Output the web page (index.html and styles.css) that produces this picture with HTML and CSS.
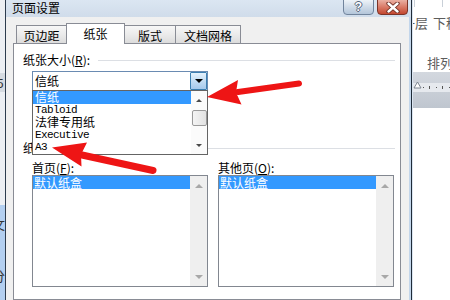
FILE: index.html
```html
<!DOCTYPE html>
<html>
<head>
<meta charset="utf-8">
<link rel="stylesheet" href="styles.css">
</head>
<body>
<div class="screen">
  <div class="app-left">
    <div class="al-top"><div class="al-box">5</div></div>
    <div class="al-bottom"><span class="al-ch">文</span><span class="al-ch al-ch2">分</span></div>
  </div>

  <div class="dialog">
    <div class="titlebar">
      <span class="title">页面设置</span>
      <div class="caption-btns">
        <div class="cbtn help"><span class="help-q">?</span></div>
        <div class="cbtn close">
          <svg width="14" height="11" viewBox="0 0 14 11">
            <path d="M2.5 1.5 L11.5 9.5 M11.5 1.5 L2.5 9.5" stroke="#6b2a20" stroke-width="4.2" stroke-linecap="round"/>
            <path d="M2.5 1.5 L11.5 9.5 M11.5 1.5 L2.5 9.5" stroke="#ffffff" stroke-width="2.4" stroke-linecap="round"/>
          </svg>
        </div>
      </div>
    </div>
    <div class="frame">
      <div class="client">
        <div class="tabs">
          <div class="tab t1">页边距</div>
          <div class="tab active t2">纸张</div>
          <div class="tab t3">版式</div>
          <div class="tab t4">文档网格</div>
        </div>
        <div class="page">
          <div class="sec-head first">
            <span class="sec-label">纸张大小(<u>R</u>):</span>
            <span class="rule"></span>
          </div>
          <div class="combo">
            <div class="combo-text">信纸</div>
            <div class="combo-btn"><span class="arrow-down-black"></span></div>
            <div class="droplist">
              <div class="dl-items">
                <div class="dl-item sel">信纸</div>
                <div class="dl-item latin">Tabloid</div>
                <div class="dl-item">法律专用纸</div>
                <div class="dl-item latin">Executive</div>
                <div class="dl-item latin">A3</div>
              </div>
              <div class="dl-scroll">
                <span class="tri-up-dark"></span>
                <span class="thumb"></span>
                <span class="dl-spacer"></span>
                <span class="tri-down-dark"></span>
              </div>
            </div>
          </div>
          <div class="sec-head second">
            <span class="sec-label">纸张来源</span>
            <span class="rule"></span>
          </div>
          <div class="cols">
            <div class="col">
              <div class="col-label">首页(<u>F</u>):</div>
              <div class="listbox">
                <div class="lb-items"><div class="lb-item sel">默认纸盒</div></div>
                <div class="lb-scroll"><span class="tri-up-gray"></span><span class="lb-spacer"></span><span class="tri-down-gray"></span></div>
              </div>
            </div>
            <div class="col">
              <div class="col-label">其他页(<u>O</u>):</div>
              <div class="listbox">
                <div class="lb-items"><div class="lb-item sel">默认纸盒</div></div>
                <div class="lb-scroll"><span class="tri-up-gray"></span><span class="lb-spacer"></span><span class="tri-down-gray"></span></div>
              </div>
            </div>
          </div>
        </div>
      </div>
      <div class="frame-strip"></div>
    </div>
  </div>

  <div class="app-right">
    <div class="rp-top"><span class="rp-vl"></span><span class="rp-vl r2"></span></div>
    <div class="rp-row1"><span>一层</span><span class="rp-gap">下移一层</span></div>
    <div class="rp-row2">排列</div>
    <div class="rp-band">
      <svg class="ruler" width="38" height="12" viewBox="0 0 38 12">
        <rect x="0" y="2" width="38" height="9" fill="#e6e9ee"/>
        <path d="M1 7 L4.5 1 L8 7 Z" fill="#ffffff" stroke="#7d8590" stroke-width="1"/>
        <rect x="10" y="6" width="1" height="1" fill="#555"/>
        <rect x="16" y="5" width="1" height="3" fill="#555"/>
        <rect x="23" y="6" width="1" height="1" fill="#555"/>
        <rect x="29" y="5" width="1" height="3" fill="#555"/>
        <rect x="36" y="6" width="1" height="1" fill="#555"/>
      </svg>
    </div>
  </div>

  <svg class="arrows" width="450" height="300" viewBox="0 0 450 300">
    <line x1="238" y1="92" x2="299" y2="83.5" stroke="#ee1515" stroke-width="6" stroke-linecap="round"/>
    <polygon points="207,97 238,80 236,92.5 241.5,104.5" fill="#ee1515"/>
    <line x1="82" y1="155" x2="153" y2="170.5" stroke="#ee1515" stroke-width="7" stroke-linecap="round"/>
    <polygon points="52,147.5 87,142.5 81,154.5 81.5,166.5" fill="#ee1515"/>
  </svg>
</div>
</body>
</html>
```

FILE: styles.css
```css
* { box-sizing: border-box; }
html, body { margin: 0; padding: 0; }
body {
  width: 450px;
  height: 300px;
  overflow: hidden;
  background: #ffffff;
  font-family: "Noto Sans CJK SC", "Noto Sans", sans-serif;
  font-size: 12px;
  color: #000;
}
.screen {
  position: relative;
  display: flex;
  width: 450px;
  height: 300px;
  overflow: hidden;
}

/* background app, left */
.app-left {
  width: 5px;
  flex: none;
  display: flex;
  flex-direction: column;
  overflow: hidden;
}
.al-top {
  height: 205px;
  background: #eceff3;
  padding-top: 73px;
}
.al-box {
  height: 19px;
  background: #d6dbe1;
  color: #333;
  font-size: 12px;
  line-height: 19px;
  text-indent: -3px;
  overflow: hidden;
}
.al-bottom {
  flex: 1;
  background: #b3cff0;
  display: flex;
  flex-direction: column;
  padding-top: 12px;
}
.al-ch {
  font-size: 13px;
  line-height: 14px;
  color: #333;
  margin-left: -8px;
  white-space: nowrap;
}
.al-ch2 { margin-top: 38px; }

/* dialog */
.dialog {
  width: 407px;
  flex: none;
  display: flex;
  flex-direction: column;
  border-left: 1px solid #2d3c4e;
  border-right: 1px solid #1f2b38;
  background: #d6e1ee;
}
.titlebar {
  height: 17px;
  display: flex;
  align-items: flex-start;
  padding-left: 6px;
  background: linear-gradient(#dbe6f2, #d0dcea);
}
.title {
  line-height: 15px;
  font-size: 12px;
  color: #000;
}
.caption-btns {
  margin-left: auto;
  margin-right: 3px;
  display: flex;
  gap: 3px;
}
.cbtn {
  width: 31px;
  height: 16px;
  margin-top: -1px;
  border-radius: 0 0 4px 4px;
  display: flex;
  align-items: center;
  justify-content: center;
}
.help {
  border: 1px solid #71849c;
  background: linear-gradient(#eef3f8, #cfdbe8 50%, #b4c6da);
}
.help-q {
  font-family: "Liberation Sans", sans-serif;
  font-weight: bold;
  font-size: 12px;
  line-height: 12px;
  color: #ffffff;
  text-shadow: 1px 0 0 #55657a, -1px 0 0 #55657a, 0 1px 0 #55657a, 0 -1px 0 #55657a;
}
.close {
  border: 1px solid #7b3428;
  background: linear-gradient(#eab0a3, #d97a67 50%, #c3472f);
}

.frame {
  flex: 1;
  display: flex;
}
.client {
  flex: 1;
  display: flex;
  flex-direction: column;
  background: #f0f0f0;
  padding: 6px 8px 0 7px;
}
.frame-strip {
  width: 2px;
  background: #c3d6eb;
}

/* tabs */
.tabs {
  height: 21px;
  display: flex;
  align-items: flex-end;
  padding-left: 3px;
  margin-bottom: -1px;
  position: relative;
  z-index: 1;
}
.tab {
  height: 18px;
  margin-bottom: 1px;
  border: 1px solid #898c95;
  border-bottom: none;
  background: linear-gradient(#f7f7f7, #ebebeb 50%, #dcdcdc);
  text-align: center;
  line-height: 19px;
  font-size: 12px;
  white-space: nowrap;
}
.t1 { width: 51px; }
.t2 { width: 59px; margin-left: -1px; }
.t3 { width: 52px; margin-left: -1px; }
.t4 { width: 66px; margin-left: -1px; }
.tab.active {
  height: 21px;
  margin-bottom: 0;
  background: #ffffff;
  line-height: 19px;
  position: relative;
  z-index: 2;
}

/* page */
.page {
  flex: 1;
  background: #ffffff;
  border: 1px solid #898c95;
  padding: 0 5px 0 9px;
}
.sec-head {
  height: 14px;
  display: flex;
  align-items: center;
}
.sec-head.first { margin-top: 9px; }
.sec-head.second { margin-top: 50px; }
.sec-label {
  line-height: 14px;
  white-space: nowrap;
}
.rule {
  flex: 1;
  height: 1px;
  margin-left: 8px;
  background: #dcdfe4;
}

/* combo */
.combo {
  position: relative;
  margin: 4px 0 0 9px;
  width: 176px;
  height: 20px;
  border: 1px solid #6a8bb2;
  display: flex;
  background: #fff;
}
.combo-text {
  flex: 1;
  padding-left: 2px;
  line-height: 18px;
}
.combo-btn {
  width: 17px;
  height: 18px;
  border: 1px solid #3c7fb1;
  border-radius: 1px;
  background: linear-gradient(#e4f1fc, #c3ddf4 50%, #a6c9ec);
  display: flex;
  align-items: center;
  justify-content: center;
}
.arrow-down-black {
  width: 0;
  height: 0;
  border-left: 4px solid transparent;
  border-right: 4px solid transparent;
  border-top: 4px solid #000;
}

.droplist {
  position: absolute;
  left: -1px;
  right: -1px;
  top: 100%;
  border: 1px solid #646464;
  background: #fff;
  display: flex;
  z-index: 5;
}
.dl-items { flex: 1; }
.dl-item {
  height: 12.5px;
  line-height: 12.5px;
  padding-left: 2px;
  white-space: nowrap;
  font-size: 12px;
}
.dl-item.latin {
  font-family: "Liberation Mono", monospace;
  font-size: 11px;
  letter-spacing: -0.6px;
}
.dl-item.sel {
  background: #3399ff;
  color: #fff;
}
.dl-scroll {
  width: 16px;
  display: flex;
  flex-direction: column;
  align-items: center;
  padding: 8px 0 7px;
  background: #fbfbfb;
}
.tri-up-dark {
  width: 0; height: 0;
  border-left: 3px solid transparent;
  border-right: 3px solid transparent;
  border-bottom: 3px solid #4a4a4a;
}
.tri-down-dark {
  width: 0; height: 0;
  border-left: 3px solid transparent;
  border-right: 3px solid transparent;
  border-top: 3px solid #4a4a4a;
}
.thumb {
  width: 15px;
  height: 16px;
  margin-top: 8px;
  border: 1px solid #9a9a9a;
  border-radius: 2px;
  background: linear-gradient(90deg, #f4f4f4, #e2e2e2);
}
.dl-spacer { flex: 1; }

/* paper source lists */
.cols {
  display: flex;
  gap: 10px;
  margin-top: 6px;
  padding-left: 9px;
}
.col {
  width: 176px;
  display: flex;
  flex-direction: column;
}
.col-label {
  height: 14px;
  line-height: 14px;
  white-space: nowrap;
}
.listbox {
  height: 112px;
  border: 1px solid #828790;
  display: flex;
  background: #fff;
}
.lb-items { flex: 1; }
.lb-item {
  height: 13px;
  line-height: 13px;
  padding-left: 1px;
  white-space: nowrap;
}
.lb-item.sel {
  background: #3399ff;
  color: #fff;
}
.lb-scroll {
  width: 17px;
  background: #efefef;
  display: flex;
  flex-direction: column;
  align-items: center;
  padding: 8px 0 7px;
}
.lb-spacer { flex: 1; }
.tri-up-gray {
  width: 0; height: 0;
  border-left: 4px solid transparent;
  border-right: 4px solid transparent;
  border-bottom: 4px solid #a8a8a8;
}
.tri-down-gray {
  width: 0; height: 0;
  border-left: 4px solid transparent;
  border-right: 4px solid transparent;
  border-top: 4px solid #a8a8a8;
}

/* background app, right */
.app-right {
  flex: 1;
  overflow: hidden;
  background: #ffffff;
  border-left: 1px solid #dbe6f2;
  display: flex;
  flex-direction: column;
}
.rp-top {
  height: 8px;
  display: flex;
}
.rp-vl {
  width: 1px;
  height: 7px;
  background: #c9d0d8;
  margin-left: 1px;
}
.rp-vl.r2 { margin-left: 27px; }
.rp-row1 {
  margin-top: 7px;
  height: 15px;
  line-height: 15px;
  font-size: 13px;
  color: #5c5c5c;
  white-space: nowrap;
  margin-left: -11px;
}
.rp-gap { margin-left: 5px; }
.rp-row2 {
  margin-top: 25px;
  height: 15px;
  line-height: 15px;
  font-size: 13px;
  color: #5c5c5c;
  padding-left: 14px;
  white-space: nowrap;
}
.rp-band {
  margin-top: 2px;
  height: 36px;
  background: linear-gradient(#d3d8df, #bfc6cf);
  padding-top: 9px;
}
.ruler { display: block; }

.arrows {
  position: absolute;
  left: 0;
  top: 0;
  z-index: 10;
  pointer-events: none;
}
```
